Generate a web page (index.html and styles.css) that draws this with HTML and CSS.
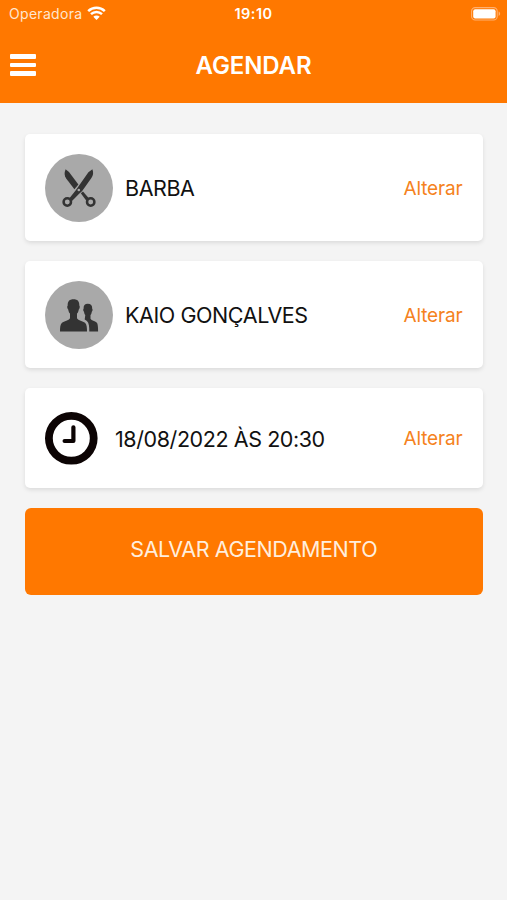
FILE: index.html
```html
<!DOCTYPE html>
<html lang="pt-BR">
<head>
    <meta charset="UTF-8">
    <meta name="viewport" content="width=device-width, initial-scale=1.0">
    <title>Agendar</title>
    <link rel="stylesheet" href="styles.css">
</head>
<body>
    <header class="header">
        <div class="status-bar">
            <div class="carrier">
                <span>Operadora</span>
                <svg class="wifi" width="19" height="15" viewBox="0 0 19 15">
                    <path d="M1.2 5.2a12 12 0 0 1 16.6 0M4 8.2a8 8 0 0 1 11 0" fill="none" stroke="#fff" stroke-width="2.5"/>
                    <path d="M9.5 14 6.3 10.8a4.6 4.6 0 0 1 6.4 0z" fill="#fff"/>
                </svg>
            </div>
            <span class="time">19:10</span>
            <svg class="battery" width="30" height="14" viewBox="0 0 30 14">
                <rect x=".6" y=".6" width="25.6" height="12.4" rx="3.6" fill="none" stroke="#ffb070" stroke-width="1.1"/>
                <rect x="2.2" y="2.2" width="22.4" height="9.2" rx="2" fill="#fff"/>
                <path d="M27.6 4.6c2 .7 2 3.7 0 4.4z" fill="#ffb070"/>
            </svg>
        </div>
        <div class="nav-bar">
            <button class="menu" aria-label="Menu">
                <span></span>
                <span></span>
                <span></span>
            </button>
            <h1>AGENDAR</h1>
        </div>
    </header>

    <main class="content">
        <div class="card">
            <svg class="avatar" viewBox="0 0 68 68">
                <circle cx="34" cy="34" r="34" fill="#a9a9a9"/>
                <g fill="#333">
                    <path d="M20.6 15.2C19 19 19.4 21.8 21.2 24.4L29.4 35.2 33.4 30.4 24 18z"/>
                    <path d="M35.8 39.2l2.2-1.8 5.8 6.8-2.6 2.2z"/>
                    <path d="M47.4 15.200c1.300 3.600.8 6.200-1 8.800L37 37.200 34.400 39.600 27 47 24.200 44.600 30.600 36.400 43.400 18.200z"/>
                </g>
                <circle cx="22.300" cy="48" r="3.700" fill="none" stroke="#333" stroke-width="2.500"/>
                <circle cx="45.700" cy="48" r="3.700" fill="none" stroke="#333" stroke-width="2.500"/>
                <circle cx="33.800" cy="36" r="1.300" fill="#a9a9a9"/>
            </svg>
            <span class="label">BARBA</span>
            <a class="change" href="#">Alterar</a>
        </div>

        <div class="card">
            <svg class="avatar" viewBox="0 0 68 68">
                <circle cx="34" cy="34" r="34" fill="#a9a9a9"/>
                <g fill="#333">
                    <path d="M28.500 18.200c4 0 6 2 5.800 6.200.8.600.6 3-.5 4-.3 2-1 3.200-1.800 4.200v4.600c1.200 2.400 6 2.800 8 4.500 1.800 1.600 2 5 2 8.800H15c0-3.800.2-7.200 2-8.800 2-1.700 6.800-2.100 8-4.500v-4.600c-.8-1-1.500-2.200-1.800-4.200-1.100-1-1.300-3.400-.5-4-.2-4.200 1.800-6.200 5.800-6.200z"/>
                    <path d="M42.800 22.700c3 0 4.600 1.800 4.400 5 .6.600.5 2.200-.4 3-.2 1.500-.6 2.500-1.300 3.400v3.600c1 2 4.500 2.300 6.100 3.800 1.300 1.200 1.500 5 1.500 9h-8.800c0-5-.2-8.400-2.400-10.500-.7-.7-1.400-1.100-2.200-1.500l.6-4.400c-.7-.9-1.100-1.900-1.300-3.400-.9-.8-1-2.400-.4-3-.2-3.200 1.200-5 4.200-5z"/>
                </g>
            </svg>
            <span class="label">KAIO GONÇALVES</span>
            <a class="change" href="#">Alterar</a>
        </div>

        <div class="card card-date">
            <svg class="clock" viewBox="0 0 53 53">
                <circle cx="26.300" cy="26.300" r="22.400" fill="none" stroke="#0c0404" stroke-width="7.800"/>
                <path d="M28.400 15.300v13.700H19.600" fill="none" stroke="#0c0404" stroke-width="4.200" stroke-linecap="round" stroke-linejoin="round"/>
            </svg>
            <span class="label">18/08/2022 ÀS 20:30</span>
            <a class="change" href="#">Alterar</a>
        </div>

        <button class="save">SALVAR AGENDAMENTO</button>
    </main>
</body>
</html>
```

FILE: styles.css
```css
* {
    box-sizing: border-box;
}
body {
    margin: 0;
    min-height: 900px;
    background: #f4f4f4;
    font-family: Inter, "Liberation Sans", sans-serif;
    color: #111;
}
.header {
    height: 103px;
    background: #ff7800;
    color: #fff;
}
.status-bar {
    display: grid;
    grid-template-columns: 1fr auto 1fr;
    align-items: center;
    height: 27px;
    padding: 0 6px 0 9px;
    font-size: 13.5px;
}
.carrier {
    display: flex;
    align-items: center;
    gap: 5px;
    color: #ffe6cf;
    font-size: 14px;
    letter-spacing: 0.3px;
}
.time {
    margin-right: 3px;
    font-size: 14.5px;
    font-weight: 600;
    letter-spacing: 0.5px;
}
.battery {
    justify-self: end;
}
.nav-bar {
    display: grid;
    grid-template-columns: 1fr auto 1fr;
    align-items: center;
    height: 76px;
    padding: 0 10px;
}
.menu {
    display: flex;
    flex-direction: column;
    gap: 4px;
    width: 26px;
    padding: 0;
    border: none;
    background: none;
}
.menu span {
    width: 100%;
    height: 4.7px;
    border-radius: 1px;
    background: #fff;
}
h1 {
    margin: 0;
    font-size: 24px;
    font-weight: 600;
    letter-spacing: -0.1px;
}
.content {
    display: flex;
    flex-direction: column;
    gap: 20px;
    padding: 31px 24.5px 0 25px;
}
.card {
    display: flex;
    align-items: center;
    height: 107px;
    padding: 0 20px;
    border-radius: 5px;
    background: #fff;
    box-shadow: 0 2px 4px rgba(0,0,0,0.1);
}
.card-date {
    height: 100px;
}
.avatar {
    width: 68px;
    height: 68px;
    margin-right: 12px;
}
.clock {
    width: 53px;
    height: 53px;
    margin-right: 17px;
}
.label {
    font-size: 21.5px;
    letter-spacing: -0.42px;
}
.change {
    margin-left: auto;
    padding-top: 2px;
    color: #f58220;
    font-size: 19px;
    letter-spacing: -0.15px;
    text-decoration: none;
}
.card-date .change,
.card-date .label {
    padding-top: 1px;
}
.save {
    height: 87px;
    padding: 0 0 6px;
    border: none;
    border-radius: 6px;
    background: #ff7800;
    color: #ffeedd;
    font-family: inherit;
    font-size: 21.5px;
    letter-spacing: -0.42px;
}
```
